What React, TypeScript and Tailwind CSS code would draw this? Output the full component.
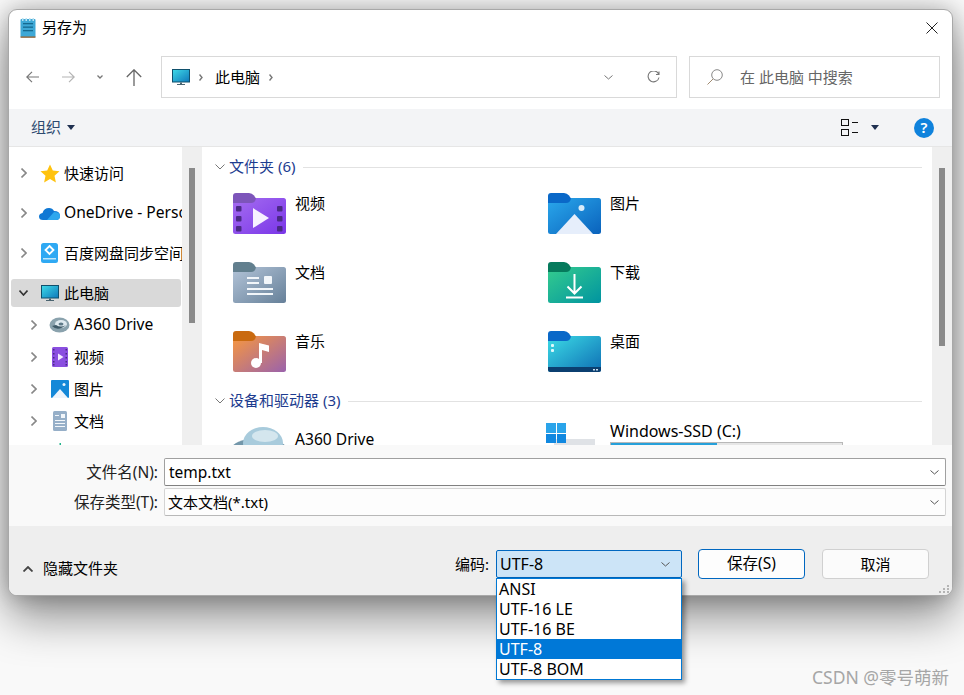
import React from 'react';

type FolderProps = { id: string; tab: string; from: string; to: string; children?: React.ReactNode };

const FolderIcon = ({ id, tab, from, to, children }: FolderProps) => (
  <svg width="53" height="42" viewBox="0 0 53 42" className="shrink-0">
    <defs>
      <linearGradient id={id} x1="0" y1="0" x2="1" y2="1">
        <stop offset="0" stopColor={from} />
        <stop offset="1" stopColor={to} />
      </linearGradient>
    </defs>
    <rect x="0" y="5" width="53" height="36" rx="2.5" fill={`url(#${id})`} />
    <path d="M0 10V3Q0 0 3 0H16Q19 0 21 2.500L23 5.500Q22 10 18 10Z" fill={tab} />
    {children}
  </svg>
);

const VideoFolder = () => (
  <FolderIcon id="fv" tab="#7d55ba" from="#a56df0" to="#7a36e8">
    <path d="M20 15L36 25L20 35Z" fill="#f6f1ff" />
    {[13, 23, 33].map((y) => (
      <g key={y} fill="#4a2a85">
        <rect x="3" y={y} width="5.500" height="5.500" rx="1" />
        <rect x="44" y={y} width="5.500" height="5.500" rx="1" />
      </g>
    ))}
  </FolderIcon>
);

const PictureFolder = () => (
  <FolderIcon id="fp" tab="#0a68c8" from="#2aa8ec" to="#0a62bc">
    <circle cx="33.500" cy="15" r="3" fill="#d8ecfa" />
    <path d="M8 41L26.500 21L45 41Z" fill="#e6eefb" />
  </FolderIcon>
);

const DocFolder = () => (
  <FolderIcon id="fd" tab="#627f8e" from="#b3c4d8" to="#668099">
    <g fill="#f2f6fa">
      <rect x="31" y="14" width="8" height="8" rx="1" />
      <rect x="14" y="15" width="12" height="2" />
      <rect x="14" y="20" width="12" height="2" />
      <rect x="14" y="26" width="26" height="2" />
      <rect x="14" y="31" width="26" height="2" />
    </g>
  </FolderIcon>
);

const DownloadFolder = () => (
  <FolderIcon id="fg" tab="#067a5c" from="#35cc8e" to="#0094a0">
    <path d="M26.500 12V31M19.500 24.500L26.500 31.500L33.500 24.500M18 35.500H35" stroke="#fff" strokeWidth="2" fill="none" />
  </FolderIcon>
);

const MusicFolder = () => (
  <FolderIcon id="fm" tab="#c96a10" from="#f8983e" to="#9a62ac">
    <circle cx="23" cy="32" r="5" fill="#fff" />
    <path d="M26 32V12L36 14.500V21L29 19V32Z" fill="#fff" />
  </FolderIcon>
);

const DesktopFolder = () => (
  <FolderIcon id="fk" tab="#0a68c8" from="#3cdce6" to="#0e6eb4">
    <path d="M0 36H53V38.500Q53 41 50.500 41H2.500Q0 41 0 38.500Z" fill="#0b3f70" />
    <rect x="3" y="13" width="3" height="3" rx="1" fill="#e0f8fb" />
    <rect x="3" y="18" width="3" height="3" rx="1" fill="#e0f8fb" />
    <rect x="45" y="38" width="2" height="1.500" fill="#cde" />
    <rect x="48" y="38" width="2" height="1.500" fill="#cde" />
  </FolderIcon>
);

const Monitor = ({ className }: { className?: string }) => (
  <svg width="18" height="17" viewBox="0 0 18 17" className={className}>
    <defs>
      <linearGradient id="mon" x1="0" y1="0" x2="1" y2="1">
        <stop offset="0" stopColor="#3fdbe8" />
        <stop offset="1" stopColor="#0f78bb" />
      </linearGradient>
    </defs>
    <rect x="0.500" y="0.500" width="17" height="12.500" fill="url(#mon)" stroke="#10506c" />
    <path d="M8 13.500H10V15H13V16H5V15H8Z" fill="#4a6470" />
  </svg>
);

const NotepadIcon = () => (
  <svg width="16" height="20" viewBox="0 0 16 20">
    <rect x="0.500" y="1" width="15" height="18.500" rx="1" fill="#3ea8d6" />
    <rect x="0.500" y="18.500" width="15" height="1.200" fill="#a35a1e" />
    <g fill="#15698f">
      <rect x="3" y="5" width="10" height="1.300" />
      <rect x="3" y="8.500" width="10" height="1.300" />
      <rect x="3" y="12" width="10" height="1.300" />
    </g>
    <g fill="#b9e2f2">
      <rect x="2" y="0" width="1.500" height="3" />
      <rect x="5.500" y="0" width="1.500" height="3" />
      <rect x="9" y="0" width="1.500" height="3" />
      <rect x="12.500" y="0" width="1.500" height="3" />
    </g>
  </svg>
);

const Star = () => (
  <svg width="20" height="19" viewBox="0 0 20 19">
    <path d="M10 0.500L12.800 6.500L19.500 7.300L14.500 11.800L15.900 18.500L10 15.100L4.100 18.500L5.500 11.800L0.500 7.300L7.200 6.500Z" fill="#ffc20e" />
  </svg>
);

const Cloud = () => (
  <svg width="21" height="13" viewBox="0 0 21 13">
    <path d="M4 13Q0 13 0 9.500Q0 6.500 3.500 6Q5 1 10 1Q13.500 1 15 4Q21 4 21 9Q21 13 17 13Z" fill="#0f78d4" />
    <path d="M8 13L15 5Q21 5 21 9Q21 13 17 13Z" fill="#2ea7ee" />
  </svg>
);

const Baidu = () => (
  <svg width="17" height="20" viewBox="0 0 17 20">
    <rect width="17" height="20" rx="2.500" fill="#2fa9f3" />
    <path d="M8.500 3L12.500 7L8.500 11L4.500 7Z" fill="none" stroke="#fff" strokeWidth="1.800" />
    <rect x="2" y="15" width="13" height="1.500" fill="#bfe6fb" />
  </svg>
);

const A360Small = () => (
  <svg width="21" height="16" viewBox="0 0 21 16">
    <ellipse cx="10.500" cy="8" rx="10" ry="7.500" fill="#8aa2ad" />
    <ellipse cx="12" cy="7" rx="6" ry="4" fill="#dfeaf0" />
    <path d="M3 9Q9 15 17 8Q12 11 7 8Z" fill="#3f5a68" />
    <ellipse cx="12" cy="7" rx="2.500" ry="1.500" fill="#5f7a88" />
  </svg>
);

const VideoSmall = () => (
  <svg width="16" height="20" viewBox="0 0 16 20">
    <rect width="16" height="20" rx="1.500" fill="#8a4fe0" />
    <path d="M6 6.500L11.500 10L6 13.500Z" fill="#f3ecff" />
    {[2, 6, 10, 14, 17].map((y) => (
      <g key={y} fill="#4a2a85">
        <rect x="1" y={y} width="1.500" height="1.500" />
        <rect x="13.500" y={y} width="1.500" height="1.500" />
      </g>
    ))}
  </svg>
);

const PictureSmall = () => (
  <svg width="18" height="18" viewBox="0 0 18 18">
    <rect width="18" height="18" rx="1" fill="#1488d8" />
    <circle cx="13" cy="4.500" r="1.500" fill="#e8f4fc" />
    <path d="M1 18L9 9L17 18Z" fill="#eef4fc" />
  </svg>
);

const DocSmall = () => (
  <svg width="14" height="20" viewBox="0 0 14 20">
    <rect width="14" height="20" rx="1.500" fill="#96afc8" />
    <rect x="8" y="3" width="4" height="4" fill="#f2f6fa" />
    <g fill="#f2f6fa">
      <rect x="2" y="4" width="4" height="1" />
      <rect x="2" y="9" width="10" height="1" />
      <rect x="2" y="12" width="10" height="1" />
      <rect x="2" y="15" width="10" height="1" />
    </g>
  </svg>
);

const DownloadSmall = () => (
  <svg width="18" height="20" viewBox="0 0 18 20">
    <rect x="8.500" y="0" width="1.500" height="2" fill="#22b48c" />
  </svg>
);

const WinIcon = () => (
  <div className="relative z-10 grid h-[20px] w-[20px] grid-cols-2 gap-[1px]">
    <div className="bg-[#2aa4ea]" />
    <div className="bg-[#2aa4ea]" />
    <div className="bg-[#1088e0]" />
    <div className="bg-[#1088e0]" />
  </div>
);

const Caret = ({ className }: { className?: string }) => (
  <svg width="8" height="5" viewBox="0 0 8 5" className={className}>
    <path d="M0 0H8L4 5Z" fill="#1f3050" />
  </svg>
);

type ChevProps = { dir?: 'right' | 'down' | 'up'; w?: number; h?: number; color?: string; sw?: number; className?: string };

// thin chevron with exact glyph size, the lucide ones carry too much padding here
const Chev = ({ dir = 'down', w = 9, h = 5, color = '#666', sw = 1.2, className }: ChevProps) => {
  const d =
    dir === 'right'
      ? `M0.500 0.500L${w - 1} ${h / 2}L0.500 ${h - 0.5}`
      : dir === 'up'
        ? `M0.500 ${h - 0.5}L${w / 2} 1L${w - 0.5} ${h - 0.5}`
        : `M0.500 0.500L${w / 2} ${h - 1}L${w - 0.5} 0.500`;
  return (
    <svg width={w} height={h} viewBox={`0 0 ${w} ${h}`} className={`shrink-0 ${className ?? ''}`}>
      <path d={d} fill="none" stroke={color} strokeWidth={sw} />
    </svg>
  );
};

type TreeRowProps = { label: string; icon: React.ReactNode; sub?: boolean };

const TreeRow = ({ label, icon, sub }: TreeRowProps) => (
  <div className={`flex items-center whitespace-nowrap ${sub ? 'h-[32px] pl-[18px]' : 'h-[40px] pl-[8px]'}`}>
    <div className="flex w-[13px] shrink-0 justify-center">
      <Chev dir="right" w={6} h={10} color="#888" sw={1.6} />
    </div>
    <div className="ml-[9px] flex w-[21px] shrink-0 justify-center">{icon}</div>
    <span className={`ml-[4px] ${/^[A-Za-z0-9]/.test(label) ? 'text-[15.600px]' : ''}`}>{label}</span>
  </div>
);

const SectionHeader = ({ label }: { label: string }) => (
  <div className="flex h-[20px] items-center pl-[13px] pr-[10px]">
    <Chev w={10} h={6} color="#777" sw={1} />
    <span className="mb-[2px] ml-[4px] whitespace-nowrap text-[#1d3c8f]">{label}</span>
    <div className="ml-[8px] h-[1px] flex-1 bg-[#e2e2e2]" />
  </div>
);

const FolderItem = ({ icon, label }: { icon: React.ReactNode; label: string }) => (
  <div className="flex h-[60px] items-start">
    {icon}
    <span className="ml-[9px] leading-[20px]">{label}</span>
  </div>
);

const Scrollbar = ({ thumbHeight }: { thumbHeight: string }) => (
  <div className="flex w-[20px] shrink-0 justify-center bg-[#efefef]">
    <div className={`mt-[21px] w-[6px] bg-[#8a8a8a] ${thumbHeight}`} />
  </div>
);

const encodings = ['ANSI', 'UTF-16 LE', 'UTF-16 BE', 'UTF-8', 'UTF-8 BOM'];

const App = () => {
  return (
    <div className="relative h-[695px] w-[964px] overflow-hidden bg-[#f9f9f9] pl-[8px] pt-[9px] font-['Noto_Sans','Noto_Sans_CJK_SC',sans-serif] text-[15px] text-black">
      <div className="relative flex h-[587px] w-[945px] flex-col rounded-[9px] border border-[#a8a8a8] bg-white shadow-[0_22px_45px_rgba(0,0,0,0.42),0_0_22px_rgba(0,0,0,0.25)]">
        {/* title bar */}
        <div className="flex h-[35px] items-center pl-[11px] pr-[14px] pt-[1px]">
          <NotepadIcon />
          <span className="ml-[6px] mb-[1px]">另存为</span>
          <svg width="12" height="12" viewBox="0 0 12 12" className="ml-auto">
            <path d="M0.500 0.500L11.500 11.500M11.500 0.500L0.500 11.500" stroke="#222" strokeWidth="1" />
          </svg>
        </div>

        {/* nav row */}
        <div className="mt-[11px] flex h-[42px] items-center">
          <div className="flex w-[152px] items-center pl-[17px]">
            <svg width="13" height="12" viewBox="0 0 13 12">
              <path d="M13 6H1M6 0.800L0.800 6L6 11.200" fill="none" stroke="#777" strokeWidth="1.200" />
            </svg>
            <svg width="13" height="12" viewBox="0 0 13 12" className="ml-[23px]">
              <path d="M0 6H12M7 0.800L12.200 6L7 11.200" fill="none" stroke="#b4b4b4" strokeWidth="1.200" />
            </svg>
            <Chev w={6} h={4} color="#777" sw={1.300} className="ml-[22px]" />
            <svg width="16" height="17" viewBox="0 0 16 17" className="ml-[23px]">
              <path d="M8 17V1M0.800 8L8 0.800L15.200 8" fill="none" stroke="#666" strokeWidth="1.300" />
            </svg>
          </div>
          <div className="flex h-[42px] w-[516px] items-center border border-[#d9d9d9] pl-[10px] pr-[16px]">
            <Monitor />
            <Chev dir="right" w={4} h={7} color="#777" sw={1.400} className="ml-[9px]" />
            <span className="ml-[12px]">此电脑</span>
            <Chev dir="right" w={4} h={7} color="#777" sw={1.400} className="ml-[9px]" />
            <Chev w={9} h={5} color="#777" sw={1} className="ml-auto" />
            <svg width="13" height="13" viewBox="0 0 13 13" className="ml-[34px]">
              <path d="M11.500 2.800A5.500 5.500 0 1 0 12 6.500M12 0.500V3.500H9" fill="none" stroke="#777" strokeWidth="1.100" />
            </svg>
          </div>
          <div className="ml-[12px] flex h-[42px] w-[251px] items-center border border-[#d9d9d9] pl-[17px]">
            <svg width="16" height="16" viewBox="0 0 16 16">
              <circle cx="10" cy="6" r="5.300" fill="none" stroke="#888" strokeWidth="1" />
              <path d="M6 10L0.500 15.500" stroke="#a08a70" strokeWidth="1" />
            </svg>
            <span className="ml-[17px] text-[#666]">在 此电脑 中搜索</span>
          </div>
        </div>

        {/* toolbar */}
        <div className="mt-[11px] flex h-[38px] shrink-0 items-center border-b border-[#e6e6e6] bg-[#f3f4f6] pl-[22px] pr-[18px]">
          <span className="text-[#2c4a70]">组织</span>
          <Caret className="ml-[6px]" />
          <svg width="17" height="17" viewBox="0 0 17 17" className="ml-auto">
            <g fill="none" stroke="#111" strokeWidth="1">
              <rect x="0.500" y="0.500" width="7" height="6" />
              <rect x="0.500" y="10.500" width="7" height="6" />
              <path d="M11 3.500H17M11 13.500H17" />
            </g>
          </svg>
          <Caret className="ml-[13px]" />
          <div className="ml-[35px] flex h-[20px] w-[20px] items-center justify-center rounded-full bg-[#0f82dc] text-[15px] font-semibold leading-none text-white">
            ?
          </div>
        </div>

        {/* browser panes */}
        <div className="flex h-[298px] shrink-0 overflow-hidden">
          <div className="w-[173px] shrink-0 overflow-hidden pt-[6px]">
            <TreeRow label="快速访问" icon={<Star />} />
            <TreeRow label="OneDrive - Personal" icon={<Cloud />} />
            <TreeRow label="百度网盘同步空间" icon={<Baidu />} />
            <div className="mt-[4px] flex h-[32px] items-center">
              <div className="ml-[2px] flex h-[28px] w-[170px] items-center rounded-[3px] bg-[#d9d9d9] pl-[6px]">
                <div className="flex w-[13px] shrink-0 justify-center">
                  <Chev w={9} h={6} color="#333" sw={1.600} />
                </div>
                <div className="ml-[9px] flex w-[21px] shrink-0 justify-center">
                  <Monitor />
                </div>
                <span className="ml-[4px]">此电脑</span>
              </div>
            </div>
            <TreeRow sub label="A360 Drive" icon={<A360Small />} />
            <TreeRow sub label="视频" icon={<VideoSmall />} />
            <TreeRow sub label="图片" icon={<PictureSmall />} />
            <TreeRow sub label="文档" icon={<DocSmall />} />
            <TreeRow sub label="下载" icon={<DownloadSmall />} />
          </div>
          <Scrollbar thumbHeight="h-[155px]" />
          <div className="min-w-0 flex-1 overflow-hidden bg-white pt-[10px]">
            <SectionHeader label="文件夹 (6)" />
            <div className="mt-[16px] grid grid-cols-[315px_315px] gap-y-[9px] pl-[31px]">
              <FolderItem icon={<VideoFolder />} label="视频" />
              <FolderItem icon={<PictureFolder />} label="图片" />
              <FolderItem icon={<DocFolder />} label="文档" />
              <FolderItem icon={<DownloadFolder />} label="下载" />
              <FolderItem icon={<MusicFolder />} label="音乐" />
              <FolderItem icon={<DesktopFolder />} label="桌面" />
            </div>
            <SectionHeader label="设备和驱动器 (3)" />
            <div className="mt-[12px] grid grid-cols-[315px_315px] pl-[27px]">
              <div className="flex items-start">
                <svg width="60" height="40" viewBox="0 0 60 40" className="mt-[4px] shrink-0">
                  <ellipse cx="30" cy="24" rx="29" ry="13" fill="#7397aa" />
                  <ellipse cx="34" cy="16" rx="20" ry="16" fill="#a8cbdc" />
                  <ellipse cx="36" cy="9" rx="13" ry="6" fill="#d4e6ee" />
                </svg>
                <span className="ml-[6px] mt-[6px] whitespace-nowrap text-[15.600px] leading-[20px]">A360 Drive</span>
              </div>
              <div className="flex items-start">
                <div className="relative ml-[2px] h-[30px] w-[64px] shrink-0">
                  <WinIcon />
                  <div className="absolute left-[8px] top-[16px] h-[20px] w-[41px] bg-[#dfe2e6]" />
                </div>
                <div className="w-[233px]">
                  <div className="mt-[-2px] whitespace-nowrap text-[16px] leading-[20px]">Windows-SSD (C:)</div>
                  <div className="mt-[1px] h-[16px] border border-[#b8b8b8] bg-[#e6e6e6]">
                    <div className="h-full w-[106px] bg-[#26a0da]" />
                  </div>
                </div>
              </div>
            </div>
          </div>
          <Scrollbar thumbHeight="h-[178px]" />
        </div>

        {/* file name fields */}
        <div className="flex h-[81px] shrink-0 flex-col gap-[2px] bg-[#f9f9f9] pt-[13px]">
          <div className="flex h-[28px] items-center">
            <span className="mt-[1px] w-[149px] whitespace-nowrap text-right text-[15.500px] text-[#222]">文件名(N):</span>
            <div className="ml-[6px] flex h-[28px] w-[782px] items-center rounded-[2px] border border-[#a0a0a0] border-b-[#808080] bg-white pl-[4px] pr-[6px]">
              <span className="mt-[1px] text-[15.500px]">temp.txt</span>
              <Chev w={9} h={5} color="#555" sw={1} className="ml-auto" />
            </div>
          </div>
          <div className="flex h-[28px] items-center">
            <span className="mt-[1px] w-[149px] whitespace-nowrap text-right text-[15.500px] text-[#222]">保存类型(T):</span>
            <div className="ml-[6px] flex h-[28px] w-[782px] items-center rounded-[2px] border border-[#d4d4d4] border-b-[#b8b8b8] bg-[#fdfdfd] pl-[3px] pr-[6px]">
              <span>文本文档(*.txt)</span>
              <Chev w={9} h={5} color="#555" sw={1} className="ml-auto" />
            </div>
          </div>
        </div>

        {/* footer */}
        <div className="flex flex-1 items-start rounded-b-[8px] bg-[#eeeeee] pl-[14px]">
          <div className="mt-[31px] flex items-center">
            <Chev dir="up" w={10} h={6} color="#444" sw={1.800} />
            <span className="mb-[2px] ml-[10px]">隐藏文件夹</span>
          </div>
          <span className="ml-[337px] mt-[27px] w-[35px] whitespace-nowrap">编码:</span>
          <div className="relative ml-[6px] mt-[24px] h-[28px] w-[186px]">
            <div className="flex h-[28px] items-center rounded-[2px] border border-[#0067c0] bg-[#cce4f7] pl-[3px] pr-[11px]">
              <span className="text-[16px]">UTF-8</span>
              <Chev w={9} h={5} color="#555" sw={1} className="ml-auto" />
            </div>
            <div className="absolute left-0 top-full z-10 w-full border border-[#0078d4] bg-white shadow-[3px_3px_5px_rgba(0,0,0,0.4)]">
              {encodings.map((item) => (
                <div
                  key={item}
                  className={`flex h-[20px] items-center pl-[2px] text-[16px] ${item === 'UTF-8' ? 'bg-[#0078d7] text-white' : ''}`}
                >
                  {item}
                </div>
              ))}
            </div>
          </div>
          <button className="ml-[16px] mt-[23px] h-[30px] w-[107px] rounded-[4px] border border-[#0067c0] bg-[#fdfdfd] text-[15.500px]">
            保存(S)
          </button>
          <button className="ml-[17px] mt-[23px] h-[30px] w-[107px] rounded-[4px] border border-[#d0d0d0] bg-[#fbfbfb]">
            取消
          </button>
        </div>

        {/* resize grip */}
        <svg width="12" height="9" viewBox="0 0 12 9" className="absolute bottom-[1px] right-[1px]">
          <g fill="#b4b4b4">
            <rect x="8" y="0" width="2" height="2" />
            <rect x="4" y="3" width="2" height="2" />
            <rect x="8" y="3" width="2" height="2" />
            <rect x="0" y="6" width="2" height="2" />
            <rect x="4" y="6" width="2" height="2" />
            <rect x="8" y="6" width="2" height="2" />
          </g>
        </svg>
      </div>

      {/* watermark */}
      <div className="absolute left-[812px] top-[665px] whitespace-nowrap text-[17.500px] leading-[24px] text-[#a6a6a6]">
        CSDN @零号萌新
      </div>
    </div>
  );
};

export default App;
